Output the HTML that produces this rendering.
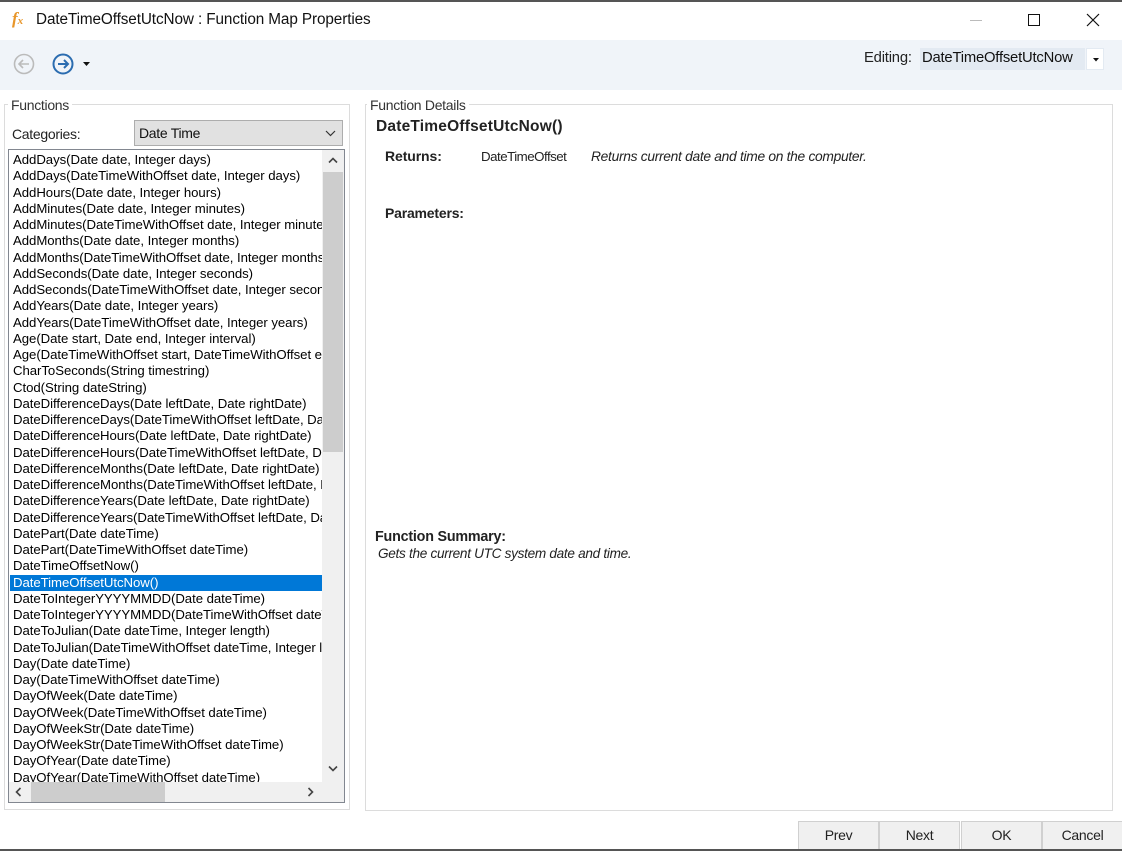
<!DOCTYPE html>
<html><head><style>
*{box-sizing:border-box;margin:0;padding:0}
body{width:1122px;height:851px;overflow:hidden;background:#fff;font-family:"Liberation Sans",sans-serif;color:#000;position:relative}
.a{position:absolute}
.list div{height:16.25px;line-height:16.25px;font-size:13.2px;letter-spacing:-0.05px;white-space:nowrap;padding-left:3px}
.sel{background:#0078d7;color:#fff}
.btn{position:absolute;top:821px;height:29px;width:81px;background:#f0f0f0;border:1px solid #d0d0d0;font-size:14px;text-align:center;line-height:27px;color:#222;letter-spacing:-0.3px}
.lbl{font-size:14px;letter-spacing:-0.3px}
</style></head><body>
<div class="a" style="left:0;top:0;width:1122px;height:2px;background:#555"></div>
<div class="a" style="left:12px;top:9px;font-family:'Liberation Serif',serif;font-style:italic;font-weight:bold;color:#e8962a;font-size:17px">f<span style="font-size:11px">x</span></div>
<div class="a" style="left:36px;top:11px;font-size:15.3px;color:#111;letter-spacing:-0.1px">DateTimeOffsetUtcNow : Function Map Properties</div>
<div class="a" style="left:970px;top:20px;width:12px;height:1px;background:#bbb"></div>
<div class="a" style="left:1028px;top:14px;width:12px;height:12px;border:1px solid #111"></div>
<svg class="a" style="left:1086px;top:13px" width="14" height="14"><path d="M1 1L13 13M13 1L1 13" stroke="#111" stroke-width="1.2"/></svg>
<div class="a" style="left:0;top:40px;width:1122px;height:50px;background:#f0f4f9"></div>
<svg class="a" style="left:13px;top:53px" width="22" height="22"><circle cx="11" cy="11" r="9.5" fill="none" stroke="#bbb" stroke-width="1.6"/><path d="M16 11H6M10 7L6 11L10 15" fill="none" stroke="#bbb" stroke-width="1.6"/></svg>
<svg class="a" style="left:52px;top:53px" width="22" height="22"><circle cx="11" cy="11" r="9.5" fill="none" stroke="#2b6cb0" stroke-width="2"/><path d="M6 11H16M12 7L16 11L12 15" fill="none" stroke="#2b6cb0" stroke-width="2"/></svg>
<svg class="a" style="left:83px;top:62px" width="7" height="5"><path d="M0 0H7L3.5 4Z" fill="#111"/></svg>
<div class="a" style="left:864px;top:50px;font-size:14.8px;color:#222;letter-spacing:-0.2px">Editing:</div>
<div class="a" style="left:920px;top:48px;width:165px;height:22px;background:#e3eaf2;padding:2px 2px;color:#111;font-size:14.8px;letter-spacing:-0.2px">DateTimeOffsetUtcNow</div>
<div class="a" style="left:1086px;top:48px;width:18px;height:22px;background:#fff;border:1px solid #e3eaf2"></div>
<svg class="a" style="left:1093px;top:58px" width="6" height="4"><path d="M0 0H6L3 3.5Z" fill="#111"/></svg>

<div class="a" style="left:4px;top:104px;width:346px;height:706px;border:1px solid #dcdcdc"></div>
<div class="a lbl" style="left:8px;top:97px;background:#fff;padding:0 3px;color:#333">Functions</div>
<div class="a lbl" style="left:12px;top:126px;color:#222">Categories:</div>
<div class="a lbl" style="left:134px;top:120px;width:209px;height:26px;background:#e1e1e1;border:1px solid #adadad;padding:4px 4px;color:#111">Date Time</div>
<svg class="a" style="left:325px;top:130px" width="11" height="7"><path d="M1 1L5.5 5.5L10 1" fill="none" stroke="#333" stroke-width="1.2"/></svg>

<div class="a" style="left:8px;top:149px;width:337px;height:654px;border:1px solid #828790;background:#fff;overflow:hidden">
<div class="list a" style="left:1px;top:2px;width:312px;overflow:hidden">
<div>AddDays(Date date, Integer days)</div>
<div>AddDays(DateTimeWithOffset date, Integer days)</div>
<div>AddHours(Date date, Integer hours)</div>
<div>AddMinutes(Date date, Integer minutes)</div>
<div>AddMinutes(DateTimeWithOffset date, Integer minutes)</div>
<div>AddMonths(Date date, Integer months)</div>
<div>AddMonths(DateTimeWithOffset date, Integer months)</div>
<div>AddSeconds(Date date, Integer seconds)</div>
<div>AddSeconds(DateTimeWithOffset date, Integer seconds)</div>
<div>AddYears(Date date, Integer years)</div>
<div>AddYears(DateTimeWithOffset date, Integer years)</div>
<div>Age(Date start, Date end, Integer interval)</div>
<div>Age(DateTimeWithOffset start, DateTimeWithOffset end)</div>
<div>CharToSeconds(String timestring)</div>
<div>Ctod(String dateString)</div>
<div>DateDifferenceDays(Date leftDate, Date rightDate)</div>
<div>DateDifferenceDays(DateTimeWithOffset leftDate, DateTime</div>
<div>DateDifferenceHours(Date leftDate, Date rightDate)</div>
<div>DateDifferenceHours(DateTimeWithOffset leftDate, DateTime</div>
<div>DateDifferenceMonths(Date leftDate, Date rightDate)</div>
<div>DateDifferenceMonths(DateTimeWithOffset leftDate, DateTime</div>
<div>DateDifferenceYears(Date leftDate, Date rightDate)</div>
<div>DateDifferenceYears(DateTimeWithOffset leftDate, DateTime</div>
<div>DatePart(Date dateTime)</div>
<div>DatePart(DateTimeWithOffset dateTime)</div>
<div>DateTimeOffsetNow()</div>
<div class="sel">DateTimeOffsetUtcNow()</div>
<div>DateToIntegerYYYYMMDD(Date dateTime)</div>
<div>DateToIntegerYYYYMMDD(DateTimeWithOffset dateTime)</div>
<div>DateToJulian(Date dateTime, Integer length)</div>
<div>DateToJulian(DateTimeWithOffset dateTime, Integer length)</div>
<div>Day(Date dateTime)</div>
<div>Day(DateTimeWithOffset dateTime)</div>
<div>DayOfWeek(Date dateTime)</div>
<div>DayOfWeek(DateTimeWithOffset dateTime)</div>
<div>DayOfWeekStr(Date dateTime)</div>
<div>DayOfWeekStr(DateTimeWithOffset dateTime)</div>
<div>DayOfYear(Date dateTime)</div>
<div>DayOfYear(DateTimeWithOffset dateTime)</div>
</div>
<div class="a" style="left:313px;top:0;width:22px;height:632px;background:#f0f0f0"></div>
<div class="a" style="left:314px;top:22px;width:20px;height:280px;background:#cdcdcd"></div>
<svg class="a" style="left:319px;top:7px" width="10" height="7"><path d="M1 5.5L5 1.5L9 5.5" fill="none" stroke="#444" stroke-width="1.6"/></svg>
<svg class="a" style="left:319px;top:615px" width="10" height="7"><path d="M1 1.5L5 5.5L9 1.5" fill="none" stroke="#444" stroke-width="1.6"/></svg>
<div class="a" style="left:0;top:632px;width:335px;height:20px;background:#f0f0f0"></div>
<div class="a" style="left:22px;top:632px;width:134px;height:20px;background:#cdcdcd"></div>
<svg class="a" style="left:6px;top:637px" width="7" height="10"><path d="M5.5 1L1.5 5L5.5 9" fill="none" stroke="#444" stroke-width="1.6"/></svg>
<svg class="a" style="left:298px;top:637px" width="7" height="10"><path d="M1.5 1L5.5 5L1.5 9" fill="none" stroke="#444" stroke-width="1.6"/></svg>
</div>

<div class="a" style="left:365px;top:104px;width:748px;height:707px;border:1px solid #dcdcdc"></div>
<div class="a lbl" style="left:367px;top:97px;background:#fff;padding:0 3px;color:#333">Function Details</div>
<div class="a" style="left:376px;top:118px;font-size:15.5px;font-weight:bold;color:#222;letter-spacing:0.2px">DateTimeOffsetUtcNow()</div>
<div class="a" style="left:385px;top:148px;font-size:14px;font-weight:bold;color:#222;letter-spacing:-0.1px">Returns:</div>
<div class="a" style="left:481px;top:149px;font-size:13.3px;color:#222;letter-spacing:-0.5px">DateTimeOffset</div>
<div class="a" style="left:591px;top:149px;font-size:13.8px;font-style:italic;color:#222;letter-spacing:-0.3px">Returns current date and time on the computer.</div>
<div class="a" style="left:385px;top:205px;font-size:14px;font-weight:bold;color:#222;letter-spacing:-0.2px">Parameters:</div>
<div class="a" style="left:375px;top:529px;font-size:14.3px;font-weight:bold;color:#222;letter-spacing:-0.2px">Function Summary:</div>
<div class="a" style="left:378px;top:546px;font-size:13.6px;font-style:italic;color:#222;letter-spacing:-0.3px">Gets the current UTC system date and time.</div>

<div class="btn" style="left:798px">Prev</div>
<div class="btn" style="left:879px">Next</div>
<div class="btn" style="left:961px">OK</div>
<div class="btn" style="left:1042px">Cancel</div>
<div class="a" style="left:0;top:849px;width:1122px;height:2px;background:#555"></div>
</body></html>
